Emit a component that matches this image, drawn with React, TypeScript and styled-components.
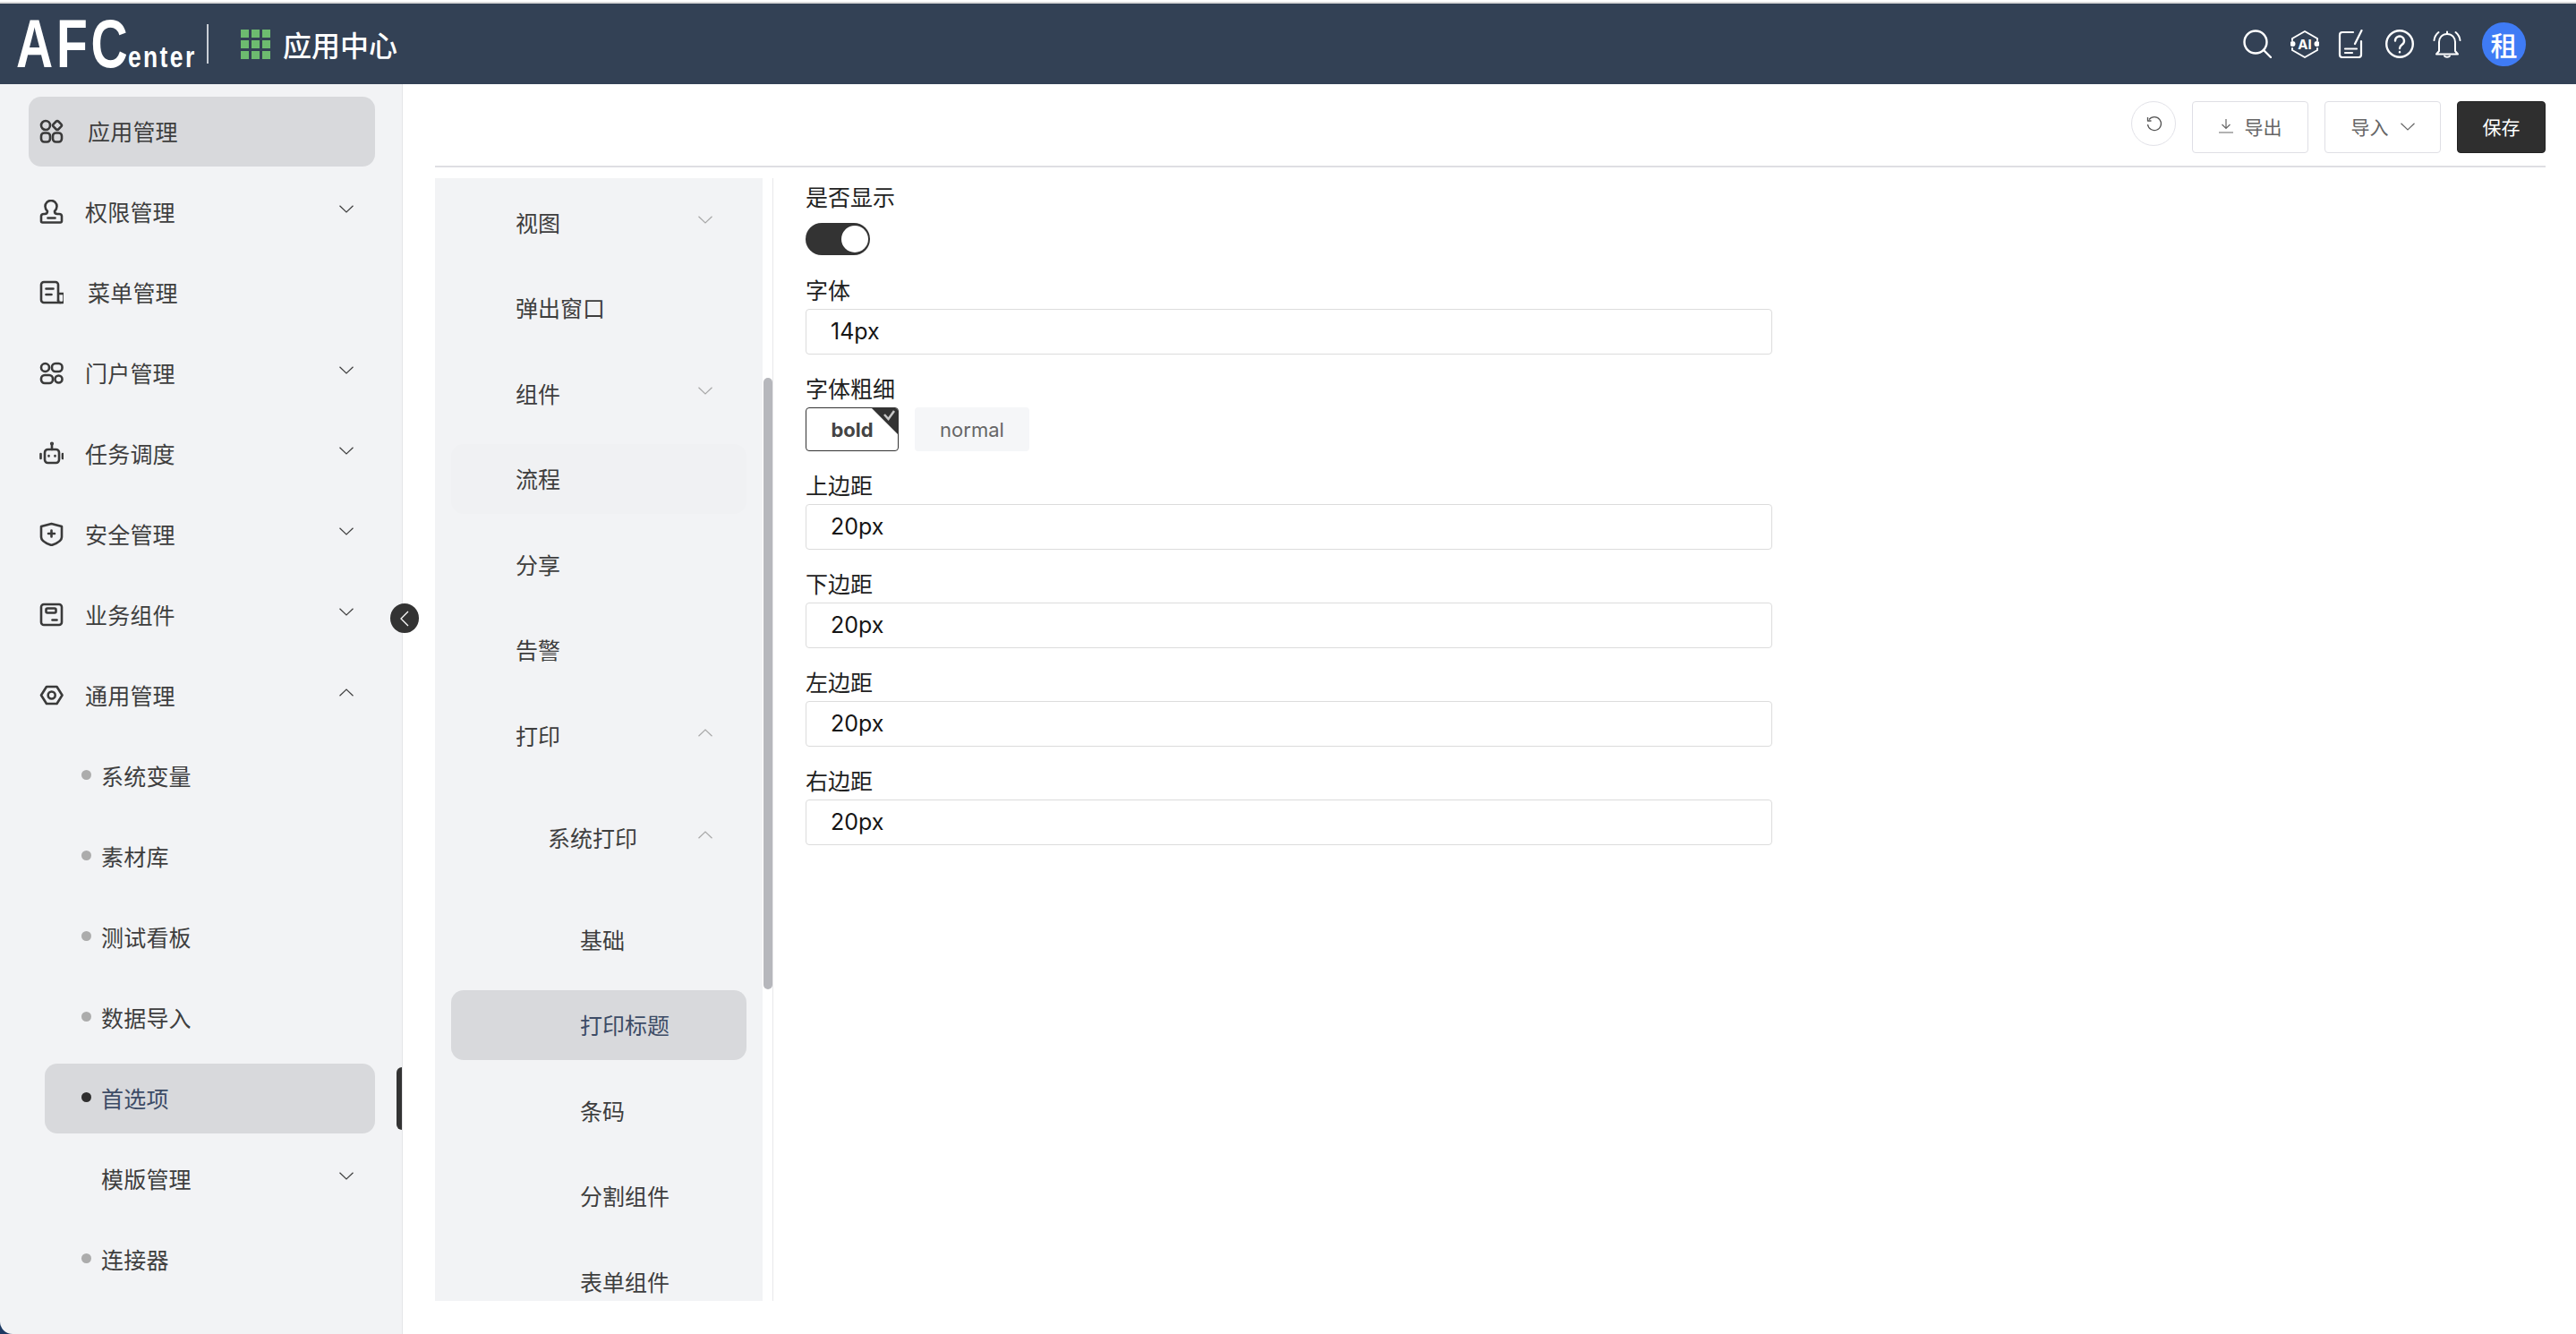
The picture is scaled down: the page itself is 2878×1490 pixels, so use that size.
import React from "react";
import styled, { createGlobalStyle } from "styled-components";

const GlobalStyle = createGlobalStyle`
  * { box-sizing: border-box; }
  html, body { margin: 0; padding: 0; height: 100%; overflow: hidden; background: #1d3a63; }
  body { font-family: Inter, "Noto Sans CJK SC", sans-serif; }
`;

const Page = styled.div`
  width: 2878px;
  height: 1490px;
  display: flex;
  flex-direction: column;
  overflow: hidden;
`;

const TopStrip = styled.div`
  height: 4px;
  flex: none;
  background: #fff;
  border-bottom: 2px solid #dcdcdc;
`;

const Header = styled.header`
  height: 90px;
  flex: none;
  background: #334155;
  display: flex;
  align-items: center;
  padding: 0 56px 0 18px;
  color: #fff;
`;

const Logo = styled.div`
  display: flex;
  align-items: baseline;
  width: 199px;
  flex: none;
  height: 76px;
  font-family: "Liberation Sans", sans-serif;
  font-weight: 700;
  line-height: 76px;
  white-space: nowrap;
`;

const LogoBig = styled.span`
  display: inline-block;
  width: 125px;
  font-size: 76px;
  letter-spacing: 5px;
  transform: scaleX(0.75);
  transform-origin: left;
`;

const LogoSmall = styled.span`
  display: inline-block;
  width: 74px;
  font-size: 33px;
  letter-spacing: 3px;
  transform: scaleX(0.8);
  transform-origin: left;
`;

const LogoDivider = styled.div`
  width: 2px;
  height: 44px;
  flex: none;
  margin: 0 36px 0 14px;
  background: #c9ced6;
`;

const AppGrid = styled.div`
  width: 33px;
  height: 33px;
  display: grid;
  grid-template-columns: repeat(3, 1fr);
  gap: 3px;
  margin-right: 14px;
`;

const AppCell = styled.i`
  background: #6dbb6f;
`;

const AppTitle = styled.div`
  font-size: 32px;
  font-weight: 500;
  font-family: "Noto Sans CJK SC", sans-serif;
`;

const HeaderTools = styled.div`
  margin-left: auto;
  display: flex;
  align-items: center;
  gap: 21px;
`;

const Avatar = styled.div`
  width: 49px;
  height: 49px;
  margin-left: 2px;
  border-radius: 50%;
  background: #3f7bf5;
  display: flex;
  align-items: center;
  justify-content: center;
  font-size: 30px;
  font-weight: 500;
  font-family: "Noto Sans CJK SC", sans-serif;
`;

const Body = styled.div`
  position: relative;
  flex: 1;
  display: flex;
  min-height: 0;
`;

const Sidebar = styled.aside`
  width: 450px;
  flex: none;
  background: #f2f3f5;
  border-right: 1px solid #e4e5e8;
  border-bottom-left-radius: 14px;
  overflow: hidden;
  padding: 14px 30px 0 32px;
  display: flex;
  flex-direction: column;
  gap: 12px;
`;

const SideRow = styled.div<{ $active?: boolean; $sub?: boolean }>`
  position: relative;
  flex: none;
  height: 78px;
  display: flex;
  align-items: center;
  margin-left: ${(p) => (p.$sub ? "18px" : "0")};
  padding: ${(p) => (p.$sub ? "0 24px 3px 41px" : "0 24px 3px 12px")};
  border-radius: 14px;
  background: ${(p) => (p.$active ? "#d8d9dc" : "transparent")};
  color: ${(p) => (p.$active && p.$sub ? "#3d4c66" : "#3e3e3e")};
  font-size: 25px;
  font-family: "Noto Sans CJK SC", sans-serif;

  &:last-child {
    margin-top: 5px;
  }
`;

const SideIcon = styled.span`
  width: 27px;
  height: 27px;
  flex: none;
  display: flex;
  margin-right: 24px;
  transform: translateY(1px);
`;

const SideLabel = styled.span<{ $leaf?: boolean }>`
  margin-left: ${(p) => (p.$leaf ? "3px" : "0")};
  letter-spacing: 0.2px;
`;

const Dot = styled.i<{ $active?: boolean; $hidden?: boolean }>`
  width: 11px;
  height: 11px;
  flex: none;
  border-radius: 50%;
  margin-right: 11px;
  background: ${(p) => (p.$hidden ? "transparent" : p.$active ? "#2f2f2f" : "#acacac")};
`;

const Chevron = styled.svg<{ $light?: boolean }>`
  width: 16px;
  height: 9px;
  flex: none;
  margin-left: auto;
  transform: translateY(-2px);
  fill: none;
  stroke: ${(p) => (p.$light ? "#a8a8a8" : "#3e3e3e")};
  stroke-width: 1.2;
`;

const ActiveMarker = styled.i`
  position: absolute;
  left: 393px;
  top: 4px;
  width: 6px;
  height: 70px;
  background: #333;
  border-radius: 8px 0 0 8px;
`;

const CollapseHandle = styled.button`
  position: absolute;
  left: 436px;
  top: 580px;
  width: 32px;
  height: 33px;
  border: 0;
  padding: 0;
  border-radius: 50%;
  background: #333;
  display: flex;
  align-items: center;
  justify-content: center;
  z-index: 2;
`;

const Main = styled.main`
  flex: 1;
  min-width: 0;
  background: #fff;
  padding-left: 36px;
  display: flex;
  flex-direction: column;
`;

const Toolbar = styled.div`
  height: 93px;
  flex: none;
  margin-right: 34px;
  padding-top: 19px;
  border-bottom: 2px solid #dedee3;
  display: flex;
  justify-content: flex-end;
  align-items: flex-start;
  gap: 18px;
`;

const RoundButton = styled.button`
  width: 50px;
  height: 50px;
  padding: 0;
  border-radius: 50%;
  border: 1px solid #e2e2e8;
  background: #fff;
  display: flex;
  align-items: center;
  justify-content: center;
`;

const ToolButton = styled.button<{ $primary?: boolean }>`
  height: 58px;
  width: ${(p) => (p.$primary ? "99px" : "130px")};
  border-radius: 4px;
  border: 1px solid ${(p) => (p.$primary ? "#222" : "#dfdfe5")};
  background: ${(p) => (p.$primary ? "#2f2f2f" : "#fff")};
  color: ${(p) => (p.$primary ? "#fff" : "#666")};
  display: flex;
  align-items: center;
  justify-content: center;
  gap: 13px;
  padding: 0 0 2px;
  font-size: 21px;
  font-family: "Noto Sans CJK SC", sans-serif;
`;

const Content = styled.div`
  margin-top: 12px;
  height: 1254px;
  flex: none;
  display: flex;
`;

const SubPanel = styled.div`
  position: relative;
  width: 378px;
  flex: none;
  padding-right: 11px;
  border-right: 1px solid #e8e8ea;
  overflow: hidden;
`;

const SubList = styled.div`
  height: 100%;
  background: #f2f3f5;
  padding: 10px 18px 0;
  overflow: hidden;
  display: flex;
  flex-direction: column;
  gap: 17.5px;
`;

const SubNested = styled.div`
  flex: none;
  display: flex;
  flex-direction: column;
  gap: 17.5px;
  padding-top: 18.5px;
`;

const SubRow = styled.div<{ $active?: boolean; $hover?: boolean; $level?: number }>`
  flex: none;
  height: 78px;
  display: flex;
  align-items: center;
  padding: 0 38px 1px ${(p) => 72 + (p.$level || 0) * 36}px;
  border-radius: 14px;
  background: ${(p) => (p.$active ? "#d8d9dc" : p.$hover ? "#f0f1f3" : "transparent")};
  color: ${(p) => (p.$active ? "#3d4c66" : "#3e3e3e")};
  font-size: 25px;
  font-family: "Noto Sans CJK SC", sans-serif;
`;

const ScrollThumb = styled.div`
  position: absolute;
  left: 367px;
  top: 223px;
  width: 10px;
  height: 683px;
  border-radius: 5px;
  background: #b6b7bc;
`;

const Form = styled.div`
  padding-left: 36px;
  width: 1116px;
  flex: none;
`;

const Field = styled.div`
  margin-bottom: 17px;
`;

const FieldLabel = styled.div`
  height: 40px;
  line-height: 40px;
  margin-bottom: 2px;
  font-size: 25px;
  color: #222;
  font-family: "Noto Sans CJK SC", sans-serif;
`;

const Switch = styled.div`
  width: 72px;
  height: 36px;
  margin: 10px 0 18px;
  border-radius: 18px;
  background: #333;
  display: flex;
  justify-content: flex-end;
  align-items: center;
  padding-right: 2px;
`;

const SwitchKnob = styled.i`
  width: 30px;
  height: 30px;
  border-radius: 50%;
  background: #fff;
`;

const TextInput = styled.div`
  height: 51px;
  border: 1px solid #dcdcdc;
  border-radius: 4px;
  padding: 0 0 2px 27px;
  display: flex;
  align-items: center;
  font-size: 25px;
  color: #151515;
`;

const Choices = styled.div`
  display: flex;
  gap: 18px;
`;

const Choice = styled.div<{ $checked?: boolean }>`
  position: relative;
  height: 49px;
  width: ${(p) => (p.$checked ? "104px" : "128px")};
  border: ${(p) => (p.$checked ? "1px solid #333" : "0")};
  border-radius: 4px;
  background: ${(p) => (p.$checked ? "#fff" : "#f5f6f8")};
  color: ${(p) => (p.$checked ? "#444" : "#666")};
  font-weight: ${(p) => (p.$checked ? 700 : 400)};
  font-size: 22px;
  display: flex;
  align-items: center;
  justify-content: center;
  overflow: hidden;
`;

const CheckCorner = styled.svg`
  position: absolute;
  right: -1px;
  top: -1px;
  width: 31px;
  height: 31px;
`;

const Ico = ({ children, size = 32, stroke = "#fff", sw = 2.4 }: { children: React.ReactNode; size?: number; stroke?: string; sw?: number }) => (
  <svg width={size} height={size} viewBox={`0 0 ${size} ${size}`} fill="none" stroke={stroke} strokeWidth={sw} strokeLinecap="round" strokeLinejoin="round">
    {children}
  </svg>
);

const sideIcons: Record<string, React.ReactNode> = {
  apps: (
    <>
      <circle cx="7" cy="7" r="5" />
      <rect x="16" y="3" width="8" height="8" rx="2" transform="rotate(45 20 7)" />
      <rect x="2" y="15.500" width="10" height="10" rx="3.500" />
      <rect x="15" y="15.500" width="10" height="10" rx="3.500" />
    </>
  ),
  stamp: (
    <>
      <path d="M9 13c-2-2-2.500-4-2.500-5.500a6.500 6.500 0 0 1 13 0C19.500 9 19 11 17 13c0 2 1 3 3 3h2c2 0 3 1 3 2.500V24a1.500 1.500 0 0 1-1.500 1.500H3.500A1.500 1.500 0 0 1 2 24v-5.500C2 17 3 16 5 16h1c2 0 3-1 3-3z" />
      <path d="M9.500 20.500h8" />
    </>
  ),
  doc: (
    <>
      <path d="M21 22.500V5a3 3 0 0 0-3-3H5a3 3 0 0 0-3 3v17a3 3 0 0 0 3 3h20a2.500 2.500 0 0 0 2.500-2.500V15h-6.500" />
      <path d="M7.500 9.500h8M7.500 16h6" />
      <path d="M21 22.500a2.500 2.500 0 0 0 2.500 2.500" />
    </>
  ),
  portal: (
    <>
      <circle cx="6.500" cy="7.500" r="4.500" />
      <rect x="14" y="3" width="11.500" height="9" rx="4" />
      <rect x="2" y="16" width="13" height="9" rx="4" />
      <circle cx="21.500" cy="20.500" r="4" />
    </>
  ),
  robot: (
    <>
      <rect x="6" y="9" width="16" height="15" rx="3.500" />
      <path d="M14 9V4" />
      <path d="M1.500 14v5M26 14v5" />
      <circle cx="14" cy="2.500" r="0.800" fill="#3a3a3a" />
      <path d="M10.500 16v.4M17.500 16v.4" />
    </>
  ),
  shield: (
    <>
      <path d="M13.500 2L25 5v12c0 4-5.500 7-11.500 9C7.500 24 2 21 2 17V5z" />
      <path d="M13.500 9.500v7M10 13h7" />
    </>
  ),
  card: (
    <>
      <rect x="2" y="2" width="23" height="23" rx="3" />
      <rect x="7.500" y="6.500" width="11" height="5" rx="1.500" />
      <path d="M14.500 19.500h5" />
    </>
  ),
  hex: (
    <>
      <path d="M8 4h11.500l6 9.500-6 9.500H8l-6-9.500z" />
      <circle cx="13.700" cy="13.500" r="4" />
    </>
  ),
};

const topMenu = [
  { label: "应用管理", icon: "apps", active: true, leaf: true },
  { label: "权限管理", icon: "stamp" },
  { label: "菜单管理", icon: "doc", leaf: true },
  { label: "门户管理", icon: "portal" },
  { label: "任务调度", icon: "robot" },
  { label: "安全管理", icon: "shield" },
  { label: "业务组件", icon: "card" },
  { label: "通用管理", icon: "hex", open: true },
];

const subMenu = [
  { label: "系统变量" },
  { label: "素材库" },
  { label: "测试看板" },
  { label: "数据导入" },
  { label: "首选项", active: true },
  { label: "模版管理", group: true },
  { label: "连接器" },
  { label: "插件管理" },
];

const Down = ({ light }: { light?: boolean }) => (
  <Chevron $light={light} viewBox="0 0 16 9">
    <path d="M0.500 0.800L8 8L15.500 0.800" />
  </Chevron>
);

const Up = ({ light }: { light?: boolean }) => (
  <Chevron $light={light} viewBox="0 0 16 9">
    <path d="M0.500 8.200L8 1L15.500 8.200" />
  </Chevron>
);

const fields = [
  { label: "上边距", value: "20px" },
  { label: "下边距", value: "20px" },
  { label: "左边距", value: "20px" },
  { label: "右边距", value: "20px" },
];

export default function App() {
  return (
    <Page>
      <GlobalStyle />
      <TopStrip />
      <Header>
        <Logo>
          <LogoBig>AFC</LogoBig>
          <LogoSmall>enter</LogoSmall>
        </Logo>
        <LogoDivider />
        <AppGrid>
          {Array.from({ length: 9 }).map((_, i) => (
            <AppCell key={i} />
          ))}
        </AppGrid>
        <AppTitle>应用中心</AppTitle>
        <HeaderTools>
          <Ico>
            <circle cx="14" cy="14" r="12.500" />
            <path d="M23 23l8 8" />
          </Ico>
          <svg width="32" height="32" viewBox="0 0 32 32" fill="none" stroke="#fff" strokeWidth="2" strokeLinecap="round" strokeLinejoin="round">
            <path d="M2 12V10l14-8 14 8v2M30 21v2l-14 8-14-8v-2" />
            <circle cx="2.500" cy="16" r="2" fill="#fff" />
            <circle cx="29.500" cy="16" r="2" fill="#fff" />
            <text x="16" y="21.500" textAnchor="middle" fontSize="15" fontWeight="700" fill="#fff" stroke="none" fontFamily="Inter, sans-serif">AI</text>
          </svg>
          <Ico sw={2.200}>
            <path d="M17 3H5a3 3 0 0 0-3 3v22a3 3 0 0 0 3 3h18a3 3 0 0 0 3-3V13" />
            <path d="M19 16L26.500 1" />
            <path d="M8 21.500h13M8 26h8" />
          </Ico>
          <Ico>
            <circle cx="16" cy="16" r="14.800" />
            <path d="M11 12.500a5 5 0 1 1 8 4c-2 1.500-3 2.300-3 4.500" />
            <path d="M16 25v.3" />
          </Ico>
          <Ico sw={2}>
            <path d="M7 24V14c0-5 3.500-9 9-9s9 4 9 9v10l3 3.500H4z" />
            <path d="M16 5V2.500M13 29.500c1 1.500 5 1.500 6 0" />
            <path d="M1.500 12C2 8 4 5 6.500 3M30.500 12C30 8 28 5 25.500 3" />
          </Ico>
          <Avatar>租</Avatar>
        </HeaderTools>
      </Header>
      <Body>
        <Sidebar>
          {topMenu.map((m) => (
            <SideRow key={m.label} $active={m.active}>
              <SideIcon>
                <Ico size={27} stroke="#3a3a3a" sw={2.600}>
                  {sideIcons[m.icon]}
                </Ico>
              </SideIcon>
              <SideLabel $leaf={m.leaf}>{m.label}</SideLabel>
              {!m.leaf && (m.open ? <Up /> : <Down />)}
            </SideRow>
          ))}
          {subMenu.map((m) => (
            <SideRow key={m.label} $sub $active={m.active}>
              <Dot $active={m.active} $hidden={m.group} />
              <SideLabel>{m.label}</SideLabel>
              {m.group && <Down />}
              {m.active && <ActiveMarker />}
            </SideRow>
          ))}
        </Sidebar>
        <CollapseHandle>
          <svg width="12" height="18" viewBox="0 0 12 18" fill="none" stroke="#fff" strokeWidth="1.300">
            <path d="M10 1L2 9l8 8" />
          </svg>
        </CollapseHandle>
        <Main>
          <Toolbar>
            <RoundButton>
              <svg width="19" height="19" viewBox="0 0 19 19" fill="none" stroke="#555" strokeWidth="1.300">
                <path d="M4 4.500A7.500 7.500 0 1 1 2.500 10" />
                <path d="M2.500 2v4h4" strokeLinejoin="round" />
              </svg>
            </RoundButton>
            <ToolButton>
              <svg width="16" height="16" viewBox="0 0 16 16" fill="none" stroke="#666" strokeWidth="1.200">
                <path d="M8 0v10M3.500 6L8 10.500 12.500 6M0 15h16" />
              </svg>
              导出
            </ToolButton>
            <ToolButton>
              导入
              <svg width="16" height="9" viewBox="0 0 16 9" fill="none" stroke="#666" strokeWidth="1.200">
                <path d="M0.500 0.800L8 8L15.500 0.800" />
              </svg>
            </ToolButton>
            <ToolButton $primary>保存</ToolButton>
          </Toolbar>
          <Content>
            <SubPanel>
              <SubList>
                <SubRow>视图<Down light /></SubRow>
                <SubRow>弹出窗口</SubRow>
                <SubRow>组件<Down light /></SubRow>
                <SubRow $hover>流程</SubRow>
                <SubRow>分享</SubRow>
                <SubRow>告警</SubRow>
                <SubRow>打印<Up light /></SubRow>
                <SubNested>
                  <SubRow $level={1}>系统打印<Up light /></SubRow>
                  <SubNested>
                    <SubRow $level={2}>基础</SubRow>
                    <SubRow $level={2} $active>打印标题</SubRow>
                    <SubRow $level={2}>条码</SubRow>
                    <SubRow $level={2}>分割组件</SubRow>
                    <SubRow $level={2}>表单组件</SubRow>
                  </SubNested>
                </SubNested>
              </SubList>
              <ScrollThumb />
            </SubPanel>
            <Form>
              <Field>
                <FieldLabel>是否显示</FieldLabel>
                <Switch>
                  <SwitchKnob />
                </Switch>
              </Field>
              <Field>
                <FieldLabel>字体</FieldLabel>
                <TextInput>14px</TextInput>
              </Field>
              <Field>
                <FieldLabel>字体粗细</FieldLabel>
                <Choices>
                  <Choice $checked>
                    bold
                    <CheckCorner viewBox="0 0 31 31">
                      <path d="M0 0H31V31z" fill="#333" />
                      <path d="M15 8l4.500 5L26 4" fill="none" stroke="#c8c8c8" strokeWidth="2.500" />
                    </CheckCorner>
                  </Choice>
                  <Choice>normal</Choice>
                </Choices>
              </Field>
              {fields.map((f) => (
                <Field key={f.label}>
                  <FieldLabel>{f.label}</FieldLabel>
                  <TextInput>{f.value}</TextInput>
                </Field>
              ))}
            </Form>
          </Content>
        </Main>
      </Body>
    </Page>
  );
}
